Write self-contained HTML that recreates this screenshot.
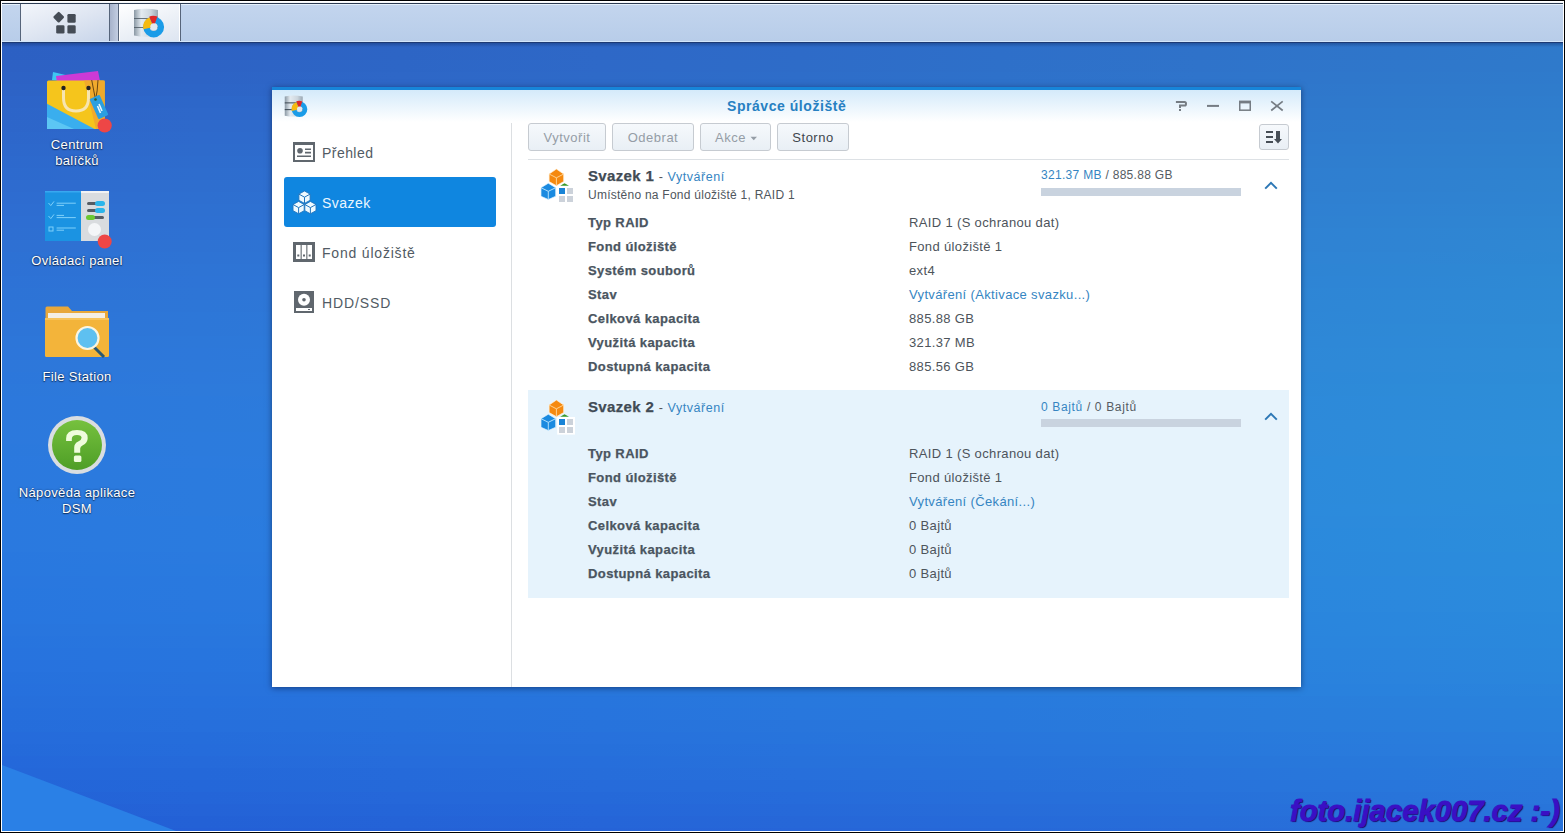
<!DOCTYPE html>
<html><head><meta charset="utf-8">
<style>
*{margin:0;padding:0;box-sizing:border-box}
html,body{width:1565px;height:833px;overflow:hidden;background:#000;font-family:"Liberation Sans",sans-serif;position:relative}
.a{position:absolute}
.t{position:absolute;white-space:nowrap}
#frame{position:absolute;left:1px;top:1px;width:1563px;height:831px;background:#fff}
#desk{position:absolute;left:2px;top:2px;width:1561px;height:829px;overflow:hidden;
 background:#2c6ed0}
.tb-sep{position:absolute;top:4px;width:1px;height:37px;background:#56647a}
.dl{position:absolute;width:160px;text-align:center;color:#fff;font-size:13px;letter-spacing:.35px;line-height:16px;text-shadow:0 0 2px rgba(0,20,60,.7),0 1px 1px rgba(0,0,0,.5)}
#win{position:absolute;left:272px;top:87px;width:1029px;height:600px;background:#fff;border-top:3px solid #1785d9;box-shadow:0 1px 6px rgba(0,10,40,.5)}
#tbar{position:absolute;left:272px;top:90px;width:1029px;height:32px;background:linear-gradient(#d4eafa,#ffffff)}
.btn{position:absolute;top:123px;height:28px;border:1px solid #c6cbd1;border-radius:3px;background:linear-gradient(#f6f9fc,#e9eff5);font-size:13px;letter-spacing:.5px;color:#959da6;text-align:center;line-height:27px}
.side{position:absolute;left:322px;font-size:14px;letter-spacing:.45px;color:#525b64;line-height:16px}
.lab{position:absolute;left:588px;font-size:13px;font-weight:bold;letter-spacing:.4px;color:#4a5560;line-height:16px;-webkit-text-stroke:.25px #4a5560}
.val{position:absolute;left:909px;font-size:13px;letter-spacing:.35px;color:#4d545b;line-height:16px}
.blue,.vh span.blue{color:#3585c2}
.vh{position:absolute;left:588px;font-size:15px;font-weight:bold;letter-spacing:.35px;color:#414b55;line-height:18px;-webkit-text-stroke:.25px #414b55}
.vh span{font-size:12.5px;font-weight:normal;letter-spacing:.55px;color:#555;-webkit-text-stroke:0}
.cap{position:absolute;left:1041px;font-size:12px;letter-spacing:.3px;color:#555c63;line-height:14px}
.bar{position:absolute;left:1041px;width:200px;height:8px;background:#c9d3df}
</style></head>
<body>
<div id="frame"></div>
<div id="desk"><svg class="a" style="left:-2px;top:-2px" width="1565" height="833"><defs><linearGradient id="r0"><stop offset="0.000" stop-color="#2c5fc2"/><stop offset="0.128" stop-color="#2d61c3"/><stop offset="0.256" stop-color="#2d64c4"/><stop offset="0.383" stop-color="#2e67c6"/><stop offset="0.511" stop-color="#2e6ac7"/><stop offset="0.639" stop-color="#2e6ec8"/><stop offset="0.767" stop-color="#2e71c9"/><stop offset="0.895" stop-color="#2f75ca"/><stop offset="1.000" stop-color="#2f79ca"/></linearGradient><linearGradient id="r1"><stop offset="0.000" stop-color="#2c5fc2"/><stop offset="0.128" stop-color="#2d61c3"/><stop offset="0.256" stop-color="#2d64c4"/><stop offset="0.383" stop-color="#2e67c6"/><stop offset="0.511" stop-color="#2e6ac7"/><stop offset="0.639" stop-color="#2e6ec8"/><stop offset="0.767" stop-color="#2e71c9"/><stop offset="0.895" stop-color="#2f75ca"/><stop offset="1.000" stop-color="#2f79ca"/></linearGradient><linearGradient id="r2"><stop offset="0.000" stop-color="#2c5fc2"/><stop offset="0.128" stop-color="#2d61c3"/><stop offset="0.256" stop-color="#2d64c4"/><stop offset="0.383" stop-color="#2e67c6"/><stop offset="0.511" stop-color="#2e6ac7"/><stop offset="0.639" stop-color="#2e6ec8"/><stop offset="0.767" stop-color="#2e71c9"/><stop offset="0.895" stop-color="#2f75ca"/><stop offset="1.000" stop-color="#2f79ca"/></linearGradient><linearGradient id="r3"><stop offset="0.000" stop-color="#2c5fc2"/><stop offset="0.128" stop-color="#2d61c3"/><stop offset="0.256" stop-color="#2d64c4"/><stop offset="0.383" stop-color="#2e67c6"/><stop offset="0.511" stop-color="#2e6ac7"/><stop offset="0.639" stop-color="#2e6ec8"/><stop offset="0.767" stop-color="#2e71c9"/><stop offset="0.895" stop-color="#2f75ca"/><stop offset="1.000" stop-color="#2f79ca"/></linearGradient><linearGradient id="r4"><stop offset="0.000" stop-color="#2c60c3"/><stop offset="0.128" stop-color="#2d62c4"/><stop offset="0.256" stop-color="#2d65c5"/><stop offset="0.383" stop-color="#2e68c7"/><stop offset="0.511" stop-color="#2e6bc8"/><stop offset="0.639" stop-color="#2e6fc9"/><stop offset="0.767" stop-color="#2f72c9"/><stop offset="0.895" stop-color="#2f76ca"/><stop offset="1.000" stop-color="#2f7acb"/></linearGradient><linearGradient id="r5"><stop offset="0.000" stop-color="#2d61c4"/><stop offset="0.128" stop-color="#2d63c5"/><stop offset="0.256" stop-color="#2d66c6"/><stop offset="0.383" stop-color="#2e69c8"/><stop offset="0.511" stop-color="#2e6cc8"/><stop offset="0.639" stop-color="#2e70c9"/><stop offset="0.767" stop-color="#2f73ca"/><stop offset="0.895" stop-color="#2f77cb"/><stop offset="1.000" stop-color="#2f7acb"/></linearGradient><linearGradient id="r6"><stop offset="0.000" stop-color="#2d62c5"/><stop offset="0.128" stop-color="#2d64c6"/><stop offset="0.256" stop-color="#2e67c7"/><stop offset="0.383" stop-color="#2e6ac8"/><stop offset="0.511" stop-color="#2e6dc9"/><stop offset="0.639" stop-color="#2e71ca"/><stop offset="0.767" stop-color="#2f74cb"/><stop offset="0.895" stop-color="#2f78cb"/><stop offset="1.000" stop-color="#2f7bcc"/></linearGradient><linearGradient id="r7"><stop offset="0.000" stop-color="#2d63c6"/><stop offset="0.128" stop-color="#2d65c7"/><stop offset="0.256" stop-color="#2e68c8"/><stop offset="0.383" stop-color="#2e6bc9"/><stop offset="0.511" stop-color="#2e6eca"/><stop offset="0.639" stop-color="#2f72cb"/><stop offset="0.767" stop-color="#2f75cb"/><stop offset="0.895" stop-color="#2f79cc"/><stop offset="1.000" stop-color="#2f7ccc"/></linearGradient><linearGradient id="r8"><stop offset="0.000" stop-color="#2d64c8"/><stop offset="0.128" stop-color="#2d67c9"/><stop offset="0.256" stop-color="#2e69c9"/><stop offset="0.383" stop-color="#2e6cca"/><stop offset="0.511" stop-color="#2e6fcb"/><stop offset="0.639" stop-color="#2f73cc"/><stop offset="0.767" stop-color="#2f76cc"/><stop offset="0.895" stop-color="#2f7acc"/><stop offset="1.000" stop-color="#2f7dcd"/></linearGradient><linearGradient id="r9"><stop offset="0.000" stop-color="#2d65c9"/><stop offset="0.128" stop-color="#2e68ca"/><stop offset="0.256" stop-color="#2e6aca"/><stop offset="0.383" stop-color="#2e6dcb"/><stop offset="0.511" stop-color="#2e70cc"/><stop offset="0.639" stop-color="#2f74cc"/><stop offset="0.767" stop-color="#2f77cd"/><stop offset="0.895" stop-color="#2f7bcd"/><stop offset="1.000" stop-color="#2f7ecd"/></linearGradient><linearGradient id="r10"><stop offset="0.000" stop-color="#2d66ca"/><stop offset="0.128" stop-color="#2e69cb"/><stop offset="0.256" stop-color="#2e6bcb"/><stop offset="0.383" stop-color="#2e6ecc"/><stop offset="0.511" stop-color="#2e71cc"/><stop offset="0.639" stop-color="#2f75cd"/><stop offset="0.767" stop-color="#2f78cd"/><stop offset="0.895" stop-color="#2f7cce"/><stop offset="1.000" stop-color="#2f7fce"/></linearGradient><linearGradient id="r11"><stop offset="0.000" stop-color="#2d67cb"/><stop offset="0.128" stop-color="#2e6acc"/><stop offset="0.256" stop-color="#2e6ccc"/><stop offset="0.383" stop-color="#2e6fcd"/><stop offset="0.511" stop-color="#2f72cd"/><stop offset="0.639" stop-color="#2f76ce"/><stop offset="0.767" stop-color="#2f79ce"/><stop offset="0.895" stop-color="#2f7dce"/><stop offset="1.000" stop-color="#2f80ce"/></linearGradient><linearGradient id="r12"><stop offset="0.000" stop-color="#2d68cc"/><stop offset="0.128" stop-color="#2e6bcc"/><stop offset="0.256" stop-color="#2e6dcd"/><stop offset="0.383" stop-color="#2e70ce"/><stop offset="0.511" stop-color="#2f73ce"/><stop offset="0.639" stop-color="#2f77ce"/><stop offset="0.767" stop-color="#2f7acf"/><stop offset="0.895" stop-color="#2f7ecf"/><stop offset="1.000" stop-color="#2f81cf"/></linearGradient><linearGradient id="r13"><stop offset="0.000" stop-color="#2d69cd"/><stop offset="0.128" stop-color="#2e6ccd"/><stop offset="0.256" stop-color="#2e6ece"/><stop offset="0.383" stop-color="#2e71ce"/><stop offset="0.511" stop-color="#2f74cf"/><stop offset="0.639" stop-color="#2f77cf"/><stop offset="0.767" stop-color="#2f7bcf"/><stop offset="0.895" stop-color="#2f7fcf"/><stop offset="1.000" stop-color="#2f82cf"/></linearGradient><linearGradient id="r14"><stop offset="0.000" stop-color="#2d6ace"/><stop offset="0.128" stop-color="#2e6dce"/><stop offset="0.256" stop-color="#2e6fcf"/><stop offset="0.383" stop-color="#2e72cf"/><stop offset="0.511" stop-color="#2f75d0"/><stop offset="0.639" stop-color="#2f78d0"/><stop offset="0.767" stop-color="#2f7cd0"/><stop offset="0.895" stop-color="#2f80d0"/><stop offset="1.000" stop-color="#2f83d0"/></linearGradient><linearGradient id="r15"><stop offset="0.000" stop-color="#2e6bcf"/><stop offset="0.128" stop-color="#2e6ecf"/><stop offset="0.256" stop-color="#2e70d0"/><stop offset="0.383" stop-color="#2e73d0"/><stop offset="0.511" stop-color="#2f76d0"/><stop offset="0.639" stop-color="#2f79d0"/><stop offset="0.767" stop-color="#2f7dd0"/><stop offset="0.895" stop-color="#2f80d0"/><stop offset="1.000" stop-color="#2f84d0"/></linearGradient><linearGradient id="r16"><stop offset="0.000" stop-color="#2e6cd0"/><stop offset="0.128" stop-color="#2e6fd0"/><stop offset="0.256" stop-color="#2e71d1"/><stop offset="0.383" stop-color="#2e74d1"/><stop offset="0.511" stop-color="#2f77d1"/><stop offset="0.639" stop-color="#2f7ad1"/><stop offset="0.767" stop-color="#2f7ed1"/><stop offset="0.895" stop-color="#2f81d1"/><stop offset="1.000" stop-color="#2f84d1"/></linearGradient><linearGradient id="r17"><stop offset="0.000" stop-color="#2e6dd1"/><stop offset="0.128" stop-color="#2e70d1"/><stop offset="0.256" stop-color="#2e72d1"/><stop offset="0.383" stop-color="#2e75d2"/><stop offset="0.511" stop-color="#2f78d2"/><stop offset="0.639" stop-color="#2f7bd2"/><stop offset="0.767" stop-color="#2f7ed2"/><stop offset="0.895" stop-color="#2f82d2"/><stop offset="1.000" stop-color="#2f85d1"/></linearGradient><linearGradient id="r18"><stop offset="0.000" stop-color="#2e6ed2"/><stop offset="0.128" stop-color="#2e70d2"/><stop offset="0.256" stop-color="#2e73d2"/><stop offset="0.383" stop-color="#2e76d2"/><stop offset="0.511" stop-color="#2f79d2"/><stop offset="0.639" stop-color="#2f7cd2"/><stop offset="0.767" stop-color="#2f7fd2"/><stop offset="0.895" stop-color="#2f83d2"/><stop offset="1.000" stop-color="#2f86d2"/></linearGradient><linearGradient id="r19"><stop offset="0.000" stop-color="#2e6fd2"/><stop offset="0.128" stop-color="#2e71d3"/><stop offset="0.256" stop-color="#2e74d3"/><stop offset="0.383" stop-color="#2e77d3"/><stop offset="0.511" stop-color="#2e79d3"/><stop offset="0.639" stop-color="#2f7dd3"/><stop offset="0.767" stop-color="#2f80d3"/><stop offset="0.895" stop-color="#2f84d3"/><stop offset="1.000" stop-color="#2f87d2"/></linearGradient><linearGradient id="r20"><stop offset="0.000" stop-color="#2e70d3"/><stop offset="0.128" stop-color="#2e72d3"/><stop offset="0.256" stop-color="#2e75d4"/><stop offset="0.383" stop-color="#2e77d4"/><stop offset="0.511" stop-color="#2e7ad4"/><stop offset="0.639" stop-color="#2f7dd4"/><stop offset="0.767" stop-color="#2f81d3"/><stop offset="0.895" stop-color="#2f84d3"/><stop offset="1.000" stop-color="#2f88d3"/></linearGradient><linearGradient id="r21"><stop offset="0.000" stop-color="#2d71d4"/><stop offset="0.128" stop-color="#2e73d4"/><stop offset="0.256" stop-color="#2e75d4"/><stop offset="0.383" stop-color="#2e78d4"/><stop offset="0.511" stop-color="#2e7bd4"/><stop offset="0.639" stop-color="#2e7ed4"/><stop offset="0.767" stop-color="#2f82d4"/><stop offset="0.895" stop-color="#2f85d4"/><stop offset="1.000" stop-color="#2e88d3"/></linearGradient><linearGradient id="r22"><stop offset="0.000" stop-color="#2d71d5"/><stop offset="0.128" stop-color="#2e74d5"/><stop offset="0.256" stop-color="#2e76d5"/><stop offset="0.383" stop-color="#2e79d5"/><stop offset="0.511" stop-color="#2e7cd5"/><stop offset="0.639" stop-color="#2e7fd5"/><stop offset="0.767" stop-color="#2e82d4"/><stop offset="0.895" stop-color="#2e86d4"/><stop offset="1.000" stop-color="#2e89d4"/></linearGradient><linearGradient id="r23"><stop offset="0.000" stop-color="#2d72d6"/><stop offset="0.128" stop-color="#2e74d6"/><stop offset="0.256" stop-color="#2e77d6"/><stop offset="0.383" stop-color="#2e7ad6"/><stop offset="0.511" stop-color="#2e7cd6"/><stop offset="0.639" stop-color="#2e80d5"/><stop offset="0.767" stop-color="#2e83d5"/><stop offset="0.895" stop-color="#2e86d5"/><stop offset="1.000" stop-color="#2e8ad4"/></linearGradient><linearGradient id="r24"><stop offset="0.000" stop-color="#2d73d6"/><stop offset="0.128" stop-color="#2e75d6"/><stop offset="0.256" stop-color="#2e78d6"/><stop offset="0.383" stop-color="#2e7ad6"/><stop offset="0.511" stop-color="#2e7dd6"/><stop offset="0.639" stop-color="#2e80d6"/><stop offset="0.767" stop-color="#2e84d6"/><stop offset="0.895" stop-color="#2e87d5"/><stop offset="1.000" stop-color="#2e8ad5"/></linearGradient><linearGradient id="r25"><stop offset="0.000" stop-color="#2d74d7"/><stop offset="0.128" stop-color="#2d76d7"/><stop offset="0.256" stop-color="#2e78d7"/><stop offset="0.383" stop-color="#2e7bd7"/><stop offset="0.511" stop-color="#2e7ed7"/><stop offset="0.639" stop-color="#2e81d6"/><stop offset="0.767" stop-color="#2e84d6"/><stop offset="0.895" stop-color="#2e88d6"/><stop offset="1.000" stop-color="#2e8bd5"/></linearGradient><linearGradient id="r26"><stop offset="0.000" stop-color="#2d74d8"/><stop offset="0.128" stop-color="#2d77d8"/><stop offset="0.256" stop-color="#2e79d8"/><stop offset="0.383" stop-color="#2e7cd8"/><stop offset="0.511" stop-color="#2e7ed7"/><stop offset="0.639" stop-color="#2e81d7"/><stop offset="0.767" stop-color="#2e85d7"/><stop offset="0.895" stop-color="#2e88d6"/><stop offset="1.000" stop-color="#2e8bd5"/></linearGradient><linearGradient id="r27"><stop offset="0.000" stop-color="#2d75d8"/><stop offset="0.128" stop-color="#2d77d8"/><stop offset="0.256" stop-color="#2e7ad8"/><stop offset="0.383" stop-color="#2e7cd8"/><stop offset="0.511" stop-color="#2e7fd8"/><stop offset="0.639" stop-color="#2e82d7"/><stop offset="0.767" stop-color="#2e85d7"/><stop offset="0.895" stop-color="#2e89d6"/><stop offset="1.000" stop-color="#2e8cd6"/></linearGradient><linearGradient id="r28"><stop offset="0.000" stop-color="#2d76d9"/><stop offset="0.128" stop-color="#2d78d9"/><stop offset="0.256" stop-color="#2d7ad9"/><stop offset="0.383" stop-color="#2e7dd9"/><stop offset="0.511" stop-color="#2e7fd8"/><stop offset="0.639" stop-color="#2e83d8"/><stop offset="0.767" stop-color="#2e86d7"/><stop offset="0.895" stop-color="#2e89d7"/><stop offset="1.000" stop-color="#2e8cd6"/></linearGradient><linearGradient id="r29"><stop offset="0.000" stop-color="#2d76da"/><stop offset="0.128" stop-color="#2d78da"/><stop offset="0.256" stop-color="#2d7bd9"/><stop offset="0.383" stop-color="#2d7dd9"/><stop offset="0.511" stop-color="#2e80d9"/><stop offset="0.639" stop-color="#2e83d8"/><stop offset="0.767" stop-color="#2e86d8"/><stop offset="0.895" stop-color="#2e8ad7"/><stop offset="1.000" stop-color="#2e8dd7"/></linearGradient><linearGradient id="r30"><stop offset="0.000" stop-color="#2d77da"/><stop offset="0.128" stop-color="#2d79da"/><stop offset="0.256" stop-color="#2d7bda"/><stop offset="0.383" stop-color="#2d7eda"/><stop offset="0.511" stop-color="#2d80d9"/><stop offset="0.639" stop-color="#2e83d9"/><stop offset="0.767" stop-color="#2e87d8"/><stop offset="0.895" stop-color="#2e8ad8"/><stop offset="1.000" stop-color="#2e8dd7"/></linearGradient><linearGradient id="r31"><stop offset="0.000" stop-color="#2c77db"/><stop offset="0.128" stop-color="#2d79db"/><stop offset="0.256" stop-color="#2d7cda"/><stop offset="0.383" stop-color="#2d7eda"/><stop offset="0.511" stop-color="#2d81da"/><stop offset="0.639" stop-color="#2d84d9"/><stop offset="0.767" stop-color="#2d87d9"/><stop offset="0.895" stop-color="#2d8ad8"/><stop offset="1.000" stop-color="#2d8dd7"/></linearGradient><linearGradient id="r32"><stop offset="0.000" stop-color="#2c78db"/><stop offset="0.128" stop-color="#2d7adb"/><stop offset="0.256" stop-color="#2d7cdb"/><stop offset="0.383" stop-color="#2d7edb"/><stop offset="0.511" stop-color="#2d81da"/><stop offset="0.639" stop-color="#2d84da"/><stop offset="0.767" stop-color="#2d87d9"/><stop offset="0.895" stop-color="#2d8bd8"/><stop offset="1.000" stop-color="#2d8ed8"/></linearGradient><linearGradient id="r33"><stop offset="0.000" stop-color="#2c78dc"/><stop offset="0.128" stop-color="#2c7adc"/><stop offset="0.256" stop-color="#2d7cdb"/><stop offset="0.383" stop-color="#2d7fdb"/><stop offset="0.511" stop-color="#2d82db"/><stop offset="0.639" stop-color="#2d85da"/><stop offset="0.767" stop-color="#2d88da"/><stop offset="0.895" stop-color="#2d8bd9"/><stop offset="1.000" stop-color="#2d8ed8"/></linearGradient><linearGradient id="r34"><stop offset="0.000" stop-color="#2c78dc"/><stop offset="0.128" stop-color="#2c7adc"/><stop offset="0.256" stop-color="#2d7ddc"/><stop offset="0.383" stop-color="#2d7fdb"/><stop offset="0.511" stop-color="#2d82db"/><stop offset="0.639" stop-color="#2d85db"/><stop offset="0.767" stop-color="#2d88da"/><stop offset="0.895" stop-color="#2d8bd9"/><stop offset="1.000" stop-color="#2d8ed9"/></linearGradient><linearGradient id="r35"><stop offset="0.000" stop-color="#2c79dd"/><stop offset="0.128" stop-color="#2c7bdc"/><stop offset="0.256" stop-color="#2c7ddc"/><stop offset="0.383" stop-color="#2d7fdc"/><stop offset="0.511" stop-color="#2d82db"/><stop offset="0.639" stop-color="#2d85db"/><stop offset="0.767" stop-color="#2d88da"/><stop offset="0.895" stop-color="#2d8cda"/><stop offset="1.000" stop-color="#2d8fd9"/></linearGradient><linearGradient id="r36"><stop offset="0.000" stop-color="#2c79dd"/><stop offset="0.128" stop-color="#2c7bdd"/><stop offset="0.256" stop-color="#2c7ddd"/><stop offset="0.383" stop-color="#2c80dc"/><stop offset="0.511" stop-color="#2d82dc"/><stop offset="0.639" stop-color="#2d85db"/><stop offset="0.767" stop-color="#2d88db"/><stop offset="0.895" stop-color="#2d8cda"/><stop offset="1.000" stop-color="#2d8fd9"/></linearGradient><linearGradient id="r37"><stop offset="0.000" stop-color="#2b79dd"/><stop offset="0.128" stop-color="#2c7bdd"/><stop offset="0.256" stop-color="#2c7ddd"/><stop offset="0.383" stop-color="#2c80dd"/><stop offset="0.511" stop-color="#2c82dc"/><stop offset="0.639" stop-color="#2d85dc"/><stop offset="0.767" stop-color="#2d88db"/><stop offset="0.895" stop-color="#2d8cda"/><stop offset="1.000" stop-color="#2d8fda"/></linearGradient><linearGradient id="r38"><stop offset="0.000" stop-color="#2b79de"/><stop offset="0.128" stop-color="#2c7bde"/><stop offset="0.256" stop-color="#2c7ddd"/><stop offset="0.383" stop-color="#2c80dd"/><stop offset="0.511" stop-color="#2c82dc"/><stop offset="0.639" stop-color="#2c85dc"/><stop offset="0.767" stop-color="#2c89db"/><stop offset="0.895" stop-color="#2c8cdb"/><stop offset="1.000" stop-color="#2c8fda"/></linearGradient><linearGradient id="r39"><stop offset="0.000" stop-color="#2b79de"/><stop offset="0.128" stop-color="#2b7bde"/><stop offset="0.256" stop-color="#2c7dde"/><stop offset="0.383" stop-color="#2c80dd"/><stop offset="0.511" stop-color="#2c83dd"/><stop offset="0.639" stop-color="#2c85dc"/><stop offset="0.767" stop-color="#2c89dc"/><stop offset="0.895" stop-color="#2c8cdb"/><stop offset="1.000" stop-color="#2c8fda"/></linearGradient><linearGradient id="r40"><stop offset="0.000" stop-color="#2b79de"/><stop offset="0.128" stop-color="#2b7bde"/><stop offset="0.256" stop-color="#2b7dde"/><stop offset="0.383" stop-color="#2c80dd"/><stop offset="0.511" stop-color="#2c83dd"/><stop offset="0.639" stop-color="#2c85dc"/><stop offset="0.767" stop-color="#2c88dc"/><stop offset="0.895" stop-color="#2c8cdb"/><stop offset="1.000" stop-color="#2c8fda"/></linearGradient><linearGradient id="r41"><stop offset="0.000" stop-color="#2a79de"/><stop offset="0.128" stop-color="#2b7bde"/><stop offset="0.256" stop-color="#2b7dde"/><stop offset="0.383" stop-color="#2b80de"/><stop offset="0.511" stop-color="#2c82dd"/><stop offset="0.639" stop-color="#2c85dd"/><stop offset="0.767" stop-color="#2c88dc"/><stop offset="0.895" stop-color="#2c8cdb"/><stop offset="1.000" stop-color="#2c8fdb"/></linearGradient><linearGradient id="r42"><stop offset="0.000" stop-color="#2a79df"/><stop offset="0.128" stop-color="#2b7bde"/><stop offset="0.256" stop-color="#2b7dde"/><stop offset="0.383" stop-color="#2b80de"/><stop offset="0.511" stop-color="#2b82dd"/><stop offset="0.639" stop-color="#2c85dd"/><stop offset="0.767" stop-color="#2c88dc"/><stop offset="0.895" stop-color="#2c8cdc"/><stop offset="1.000" stop-color="#2c8edb"/></linearGradient><linearGradient id="r43"><stop offset="0.000" stop-color="#2a79df"/><stop offset="0.128" stop-color="#2a7bdf"/><stop offset="0.256" stop-color="#2b7dde"/><stop offset="0.383" stop-color="#2b80de"/><stop offset="0.511" stop-color="#2b82de"/><stop offset="0.639" stop-color="#2b85dd"/><stop offset="0.767" stop-color="#2c88dc"/><stop offset="0.895" stop-color="#2c8bdc"/><stop offset="1.000" stop-color="#2c8edb"/></linearGradient><linearGradient id="r44"><stop offset="0.000" stop-color="#2a79df"/><stop offset="0.128" stop-color="#2a7bdf"/><stop offset="0.256" stop-color="#2b7ddf"/><stop offset="0.383" stop-color="#2b7fde"/><stop offset="0.511" stop-color="#2b82de"/><stop offset="0.639" stop-color="#2b85dd"/><stop offset="0.767" stop-color="#2b88dd"/><stop offset="0.895" stop-color="#2b8bdc"/><stop offset="1.000" stop-color="#2c8edb"/></linearGradient><linearGradient id="r45"><stop offset="0.000" stop-color="#2a79df"/><stop offset="0.128" stop-color="#2a7bdf"/><stop offset="0.256" stop-color="#2a7ddf"/><stop offset="0.383" stop-color="#2b7fde"/><stop offset="0.511" stop-color="#2b82de"/><stop offset="0.639" stop-color="#2b84dd"/><stop offset="0.767" stop-color="#2b87dd"/><stop offset="0.895" stop-color="#2b8bdc"/><stop offset="1.000" stop-color="#2b8edb"/></linearGradient><linearGradient id="r46"><stop offset="0.000" stop-color="#2978df"/><stop offset="0.128" stop-color="#2a7adf"/><stop offset="0.256" stop-color="#2a7cdf"/><stop offset="0.383" stop-color="#2a7fde"/><stop offset="0.511" stop-color="#2b81de"/><stop offset="0.639" stop-color="#2b84de"/><stop offset="0.767" stop-color="#2b87dd"/><stop offset="0.895" stop-color="#2b8adc"/><stop offset="1.000" stop-color="#2b8ddc"/></linearGradient><linearGradient id="r47"><stop offset="0.000" stop-color="#2978df"/><stop offset="0.128" stop-color="#297adf"/><stop offset="0.256" stop-color="#2a7cdf"/><stop offset="0.383" stop-color="#2a7ede"/><stop offset="0.511" stop-color="#2a81de"/><stop offset="0.639" stop-color="#2b84de"/><stop offset="0.767" stop-color="#2b87dd"/><stop offset="0.895" stop-color="#2b8adc"/><stop offset="1.000" stop-color="#2b8ddc"/></linearGradient><linearGradient id="r48"><stop offset="0.000" stop-color="#2977df"/><stop offset="0.128" stop-color="#2979df"/><stop offset="0.256" stop-color="#2a7bdf"/><stop offset="0.383" stop-color="#2a7ede"/><stop offset="0.511" stop-color="#2a80de"/><stop offset="0.639" stop-color="#2a83de"/><stop offset="0.767" stop-color="#2b86dd"/><stop offset="0.895" stop-color="#2b89dd"/><stop offset="1.000" stop-color="#2b8cdc"/></linearGradient><linearGradient id="r49"><stop offset="0.000" stop-color="#2877df"/><stop offset="0.128" stop-color="#2979df"/><stop offset="0.256" stop-color="#297bdf"/><stop offset="0.383" stop-color="#2a7dde"/><stop offset="0.511" stop-color="#2a80de"/><stop offset="0.639" stop-color="#2a83de"/><stop offset="0.767" stop-color="#2a86dd"/><stop offset="0.895" stop-color="#2b89dd"/><stop offset="1.000" stop-color="#2b8cdc"/></linearGradient><linearGradient id="r50"><stop offset="0.000" stop-color="#2876df"/><stop offset="0.128" stop-color="#2978df"/><stop offset="0.256" stop-color="#297adf"/><stop offset="0.383" stop-color="#297dde"/><stop offset="0.511" stop-color="#2a7fde"/><stop offset="0.639" stop-color="#2a82de"/><stop offset="0.767" stop-color="#2a85dd"/><stop offset="0.895" stop-color="#2b88dd"/><stop offset="1.000" stop-color="#2b8bdc"/></linearGradient><linearGradient id="r51"><stop offset="0.000" stop-color="#2876df"/><stop offset="0.128" stop-color="#2878df"/><stop offset="0.256" stop-color="#297adf"/><stop offset="0.383" stop-color="#297cde"/><stop offset="0.511" stop-color="#2a7fde"/><stop offset="0.639" stop-color="#2a81de"/><stop offset="0.767" stop-color="#2a84dd"/><stop offset="0.895" stop-color="#2a87dd"/><stop offset="1.000" stop-color="#2a8adc"/></linearGradient><linearGradient id="r52"><stop offset="0.000" stop-color="#2875de"/><stop offset="0.128" stop-color="#2877de"/><stop offset="0.256" stop-color="#2979de"/><stop offset="0.383" stop-color="#297bde"/><stop offset="0.511" stop-color="#297ede"/><stop offset="0.639" stop-color="#2a81de"/><stop offset="0.767" stop-color="#2a83dd"/><stop offset="0.895" stop-color="#2a87dd"/><stop offset="1.000" stop-color="#2a89dc"/></linearGradient><linearGradient id="r53"><stop offset="0.000" stop-color="#2774de"/><stop offset="0.128" stop-color="#2876de"/><stop offset="0.256" stop-color="#2878de"/><stop offset="0.383" stop-color="#297ade"/><stop offset="0.511" stop-color="#297dde"/><stop offset="0.639" stop-color="#2980de"/><stop offset="0.767" stop-color="#2a83dd"/><stop offset="0.895" stop-color="#2a86dd"/><stop offset="1.000" stop-color="#2a89dc"/></linearGradient><linearGradient id="r54"><stop offset="0.000" stop-color="#2773de"/><stop offset="0.128" stop-color="#2775de"/><stop offset="0.256" stop-color="#2877de"/><stop offset="0.383" stop-color="#287ade"/><stop offset="0.511" stop-color="#297cde"/><stop offset="0.639" stop-color="#297fde"/><stop offset="0.767" stop-color="#2a82dd"/><stop offset="0.895" stop-color="#2a85dd"/><stop offset="1.000" stop-color="#2a88dc"/></linearGradient><linearGradient id="r55"><stop offset="0.000" stop-color="#2772de"/><stop offset="0.128" stop-color="#2774de"/><stop offset="0.256" stop-color="#2876de"/><stop offset="0.383" stop-color="#2879de"/><stop offset="0.511" stop-color="#297bde"/><stop offset="0.639" stop-color="#297edd"/><stop offset="0.767" stop-color="#2981dd"/><stop offset="0.895" stop-color="#2a84dd"/><stop offset="1.000" stop-color="#2a87dc"/></linearGradient><linearGradient id="r56"><stop offset="0.000" stop-color="#2671dd"/><stop offset="0.128" stop-color="#2773dd"/><stop offset="0.256" stop-color="#2775de"/><stop offset="0.383" stop-color="#2878de"/><stop offset="0.511" stop-color="#287add"/><stop offset="0.639" stop-color="#297ddd"/><stop offset="0.767" stop-color="#2980dd"/><stop offset="0.895" stop-color="#2a83dd"/><stop offset="1.000" stop-color="#2a86dc"/></linearGradient><linearGradient id="r57"><stop offset="0.000" stop-color="#2670dd"/><stop offset="0.128" stop-color="#2772dd"/><stop offset="0.256" stop-color="#2774dd"/><stop offset="0.383" stop-color="#2877dd"/><stop offset="0.511" stop-color="#2879dd"/><stop offset="0.639" stop-color="#297cdd"/><stop offset="0.767" stop-color="#297fdd"/><stop offset="0.895" stop-color="#2982dd"/><stop offset="1.000" stop-color="#2a84dc"/></linearGradient><linearGradient id="r58"><stop offset="0.000" stop-color="#266fdc"/><stop offset="0.128" stop-color="#2671dd"/><stop offset="0.256" stop-color="#2773dd"/><stop offset="0.383" stop-color="#2775dd"/><stop offset="0.511" stop-color="#2878dd"/><stop offset="0.639" stop-color="#287add"/><stop offset="0.767" stop-color="#297ddd"/><stop offset="0.895" stop-color="#2980dc"/><stop offset="1.000" stop-color="#2983dc"/></linearGradient><linearGradient id="r59"><stop offset="0.000" stop-color="#256edc"/><stop offset="0.128" stop-color="#2670dc"/><stop offset="0.256" stop-color="#2772dc"/><stop offset="0.383" stop-color="#2774dd"/><stop offset="0.511" stop-color="#2877dd"/><stop offset="0.639" stop-color="#2879dd"/><stop offset="0.767" stop-color="#297cdc"/><stop offset="0.895" stop-color="#297fdc"/><stop offset="1.000" stop-color="#2982dc"/></linearGradient><linearGradient id="r60"><stop offset="0.000" stop-color="#256ddb"/><stop offset="0.128" stop-color="#266fdc"/><stop offset="0.256" stop-color="#2671dc"/><stop offset="0.383" stop-color="#2773dc"/><stop offset="0.511" stop-color="#2875dc"/><stop offset="0.639" stop-color="#2878dc"/><stop offset="0.767" stop-color="#297bdc"/><stop offset="0.895" stop-color="#297edc"/><stop offset="1.000" stop-color="#2981dc"/></linearGradient><linearGradient id="r61"><stop offset="0.000" stop-color="#256bdb"/><stop offset="0.128" stop-color="#256ddb"/><stop offset="0.256" stop-color="#266fdc"/><stop offset="0.383" stop-color="#2771dc"/><stop offset="0.511" stop-color="#2774dc"/><stop offset="0.639" stop-color="#2876dc"/><stop offset="0.767" stop-color="#2879dc"/><stop offset="0.895" stop-color="#297cdc"/><stop offset="1.000" stop-color="#297fdc"/></linearGradient><linearGradient id="r62"><stop offset="0.000" stop-color="#246ada"/><stop offset="0.128" stop-color="#256cdb"/><stop offset="0.256" stop-color="#266edb"/><stop offset="0.383" stop-color="#2670db"/><stop offset="0.511" stop-color="#2772dc"/><stop offset="0.639" stop-color="#2875dc"/><stop offset="0.767" stop-color="#2878dc"/><stop offset="0.895" stop-color="#297bdc"/><stop offset="1.000" stop-color="#297edc"/></linearGradient><linearGradient id="r63"><stop offset="0.000" stop-color="#2468da"/><stop offset="0.128" stop-color="#256ada"/><stop offset="0.256" stop-color="#266cdb"/><stop offset="0.383" stop-color="#266edb"/><stop offset="0.511" stop-color="#2771db"/><stop offset="0.639" stop-color="#2773db"/><stop offset="0.767" stop-color="#2876db"/><stop offset="0.895" stop-color="#2879db"/><stop offset="1.000" stop-color="#297cdb"/></linearGradient><linearGradient id="r64"><stop offset="0.000" stop-color="#2467d9"/><stop offset="0.128" stop-color="#2468d9"/><stop offset="0.256" stop-color="#256ada"/><stop offset="0.383" stop-color="#266dda"/><stop offset="0.511" stop-color="#276fdb"/><stop offset="0.639" stop-color="#2772db"/><stop offset="0.767" stop-color="#2874db"/><stop offset="0.895" stop-color="#2878db"/><stop offset="1.000" stop-color="#297adb"/></linearGradient><linearGradient id="r65"><stop offset="0.000" stop-color="#2365d8"/><stop offset="0.128" stop-color="#2467d9"/><stop offset="0.256" stop-color="#2569d9"/><stop offset="0.383" stop-color="#266bda"/><stop offset="0.511" stop-color="#266dda"/><stop offset="0.639" stop-color="#2770da"/><stop offset="0.767" stop-color="#2873db"/><stop offset="0.895" stop-color="#2876db"/><stop offset="1.000" stop-color="#2978db"/></linearGradient><linearGradient id="r66"><stop offset="0.000" stop-color="#2363d7"/><stop offset="0.128" stop-color="#2465d8"/><stop offset="0.256" stop-color="#2567d9"/><stop offset="0.383" stop-color="#2569d9"/><stop offset="0.511" stop-color="#266bda"/><stop offset="0.639" stop-color="#276eda"/><stop offset="0.767" stop-color="#2771da"/><stop offset="0.895" stop-color="#2874da"/><stop offset="1.000" stop-color="#2977db"/></linearGradient><linearGradient id="r67"><stop offset="0.000" stop-color="#2361d6"/><stop offset="0.128" stop-color="#2463d7"/><stop offset="0.256" stop-color="#2465d8"/><stop offset="0.383" stop-color="#2567d9"/><stop offset="0.511" stop-color="#2669d9"/><stop offset="0.639" stop-color="#276cd9"/><stop offset="0.767" stop-color="#276fda"/><stop offset="0.895" stop-color="#2872da"/><stop offset="1.000" stop-color="#2875da"/></linearGradient><linearGradient id="r68"><stop offset="0.000" stop-color="#225fd6"/><stop offset="0.128" stop-color="#2361d6"/><stop offset="0.256" stop-color="#2463d7"/><stop offset="0.383" stop-color="#2565d8"/><stop offset="0.511" stop-color="#2667d8"/><stop offset="0.639" stop-color="#266ad9"/><stop offset="0.767" stop-color="#276dd9"/><stop offset="0.895" stop-color="#2870da"/><stop offset="1.000" stop-color="#2873da"/></linearGradient><linearGradient id="r69"><stop offset="0.000" stop-color="#225dd5"/><stop offset="0.128" stop-color="#235fd6"/><stop offset="0.256" stop-color="#2461d6"/><stop offset="0.383" stop-color="#2563d7"/><stop offset="0.511" stop-color="#2665d8"/><stop offset="0.639" stop-color="#2668d8"/><stop offset="0.767" stop-color="#276bd9"/><stop offset="0.895" stop-color="#286ed9"/><stop offset="1.000" stop-color="#2870d9"/></linearGradient></defs><rect y="0" width="1565" height="12" fill="url(#r0)"/><rect y="12" width="1565" height="12" fill="url(#r1)"/><rect y="24" width="1565" height="12" fill="url(#r2)"/><rect y="36" width="1565" height="12" fill="url(#r3)"/><rect y="48" width="1565" height="12" fill="url(#r4)"/><rect y="60" width="1565" height="12" fill="url(#r5)"/><rect y="72" width="1565" height="12" fill="url(#r6)"/><rect y="84" width="1565" height="12" fill="url(#r7)"/><rect y="96" width="1565" height="12" fill="url(#r8)"/><rect y="108" width="1565" height="12" fill="url(#r9)"/><rect y="120" width="1565" height="12" fill="url(#r10)"/><rect y="132" width="1565" height="12" fill="url(#r11)"/><rect y="144" width="1565" height="12" fill="url(#r12)"/><rect y="156" width="1565" height="12" fill="url(#r13)"/><rect y="168" width="1565" height="12" fill="url(#r14)"/><rect y="180" width="1565" height="12" fill="url(#r15)"/><rect y="192" width="1565" height="12" fill="url(#r16)"/><rect y="204" width="1565" height="12" fill="url(#r17)"/><rect y="216" width="1565" height="12" fill="url(#r18)"/><rect y="228" width="1565" height="12" fill="url(#r19)"/><rect y="240" width="1565" height="12" fill="url(#r20)"/><rect y="252" width="1565" height="12" fill="url(#r21)"/><rect y="264" width="1565" height="12" fill="url(#r22)"/><rect y="276" width="1565" height="12" fill="url(#r23)"/><rect y="288" width="1565" height="12" fill="url(#r24)"/><rect y="300" width="1565" height="12" fill="url(#r25)"/><rect y="312" width="1565" height="12" fill="url(#r26)"/><rect y="324" width="1565" height="12" fill="url(#r27)"/><rect y="336" width="1565" height="12" fill="url(#r28)"/><rect y="348" width="1565" height="12" fill="url(#r29)"/><rect y="360" width="1565" height="12" fill="url(#r30)"/><rect y="372" width="1565" height="12" fill="url(#r31)"/><rect y="384" width="1565" height="12" fill="url(#r32)"/><rect y="396" width="1565" height="12" fill="url(#r33)"/><rect y="408" width="1565" height="12" fill="url(#r34)"/><rect y="420" width="1565" height="12" fill="url(#r35)"/><rect y="432" width="1565" height="12" fill="url(#r36)"/><rect y="444" width="1565" height="12" fill="url(#r37)"/><rect y="456" width="1565" height="12" fill="url(#r38)"/><rect y="468" width="1565" height="12" fill="url(#r39)"/><rect y="480" width="1565" height="12" fill="url(#r40)"/><rect y="492" width="1565" height="12" fill="url(#r41)"/><rect y="504" width="1565" height="12" fill="url(#r42)"/><rect y="516" width="1565" height="12" fill="url(#r43)"/><rect y="528" width="1565" height="12" fill="url(#r44)"/><rect y="540" width="1565" height="12" fill="url(#r45)"/><rect y="552" width="1565" height="12" fill="url(#r46)"/><rect y="564" width="1565" height="12" fill="url(#r47)"/><rect y="576" width="1565" height="12" fill="url(#r48)"/><rect y="588" width="1565" height="12" fill="url(#r49)"/><rect y="600" width="1565" height="12" fill="url(#r50)"/><rect y="612" width="1565" height="12" fill="url(#r51)"/><rect y="624" width="1565" height="12" fill="url(#r52)"/><rect y="636" width="1565" height="12" fill="url(#r53)"/><rect y="648" width="1565" height="12" fill="url(#r54)"/><rect y="660" width="1565" height="12" fill="url(#r55)"/><rect y="672" width="1565" height="12" fill="url(#r56)"/><rect y="684" width="1565" height="12" fill="url(#r57)"/><rect y="696" width="1565" height="12" fill="url(#r58)"/><rect y="708" width="1565" height="12" fill="url(#r59)"/><rect y="720" width="1565" height="12" fill="url(#r60)"/><rect y="732" width="1565" height="12" fill="url(#r61)"/><rect y="744" width="1565" height="12" fill="url(#r62)"/><rect y="756" width="1565" height="12" fill="url(#r63)"/><rect y="768" width="1565" height="12" fill="url(#r64)"/><rect y="780" width="1565" height="12" fill="url(#r65)"/><rect y="792" width="1565" height="12" fill="url(#r66)"/><rect y="804" width="1565" height="12" fill="url(#r67)"/><rect y="816" width="1565" height="12" fill="url(#r68)"/><rect y="828" width="1565" height="12" fill="url(#r69)"/></svg><svg class="a" style="left:0;top:0" width="1565" height="833"><path d="M0 763 L174 829 L0 829 Z" fill="#2a80e6"/></svg></div>

<!-- taskbar -->
<div class="a" style="left:2px;top:2px;width:1561px;height:1px;background:#f4f6f8"></div>
<div class="a" style="left:2px;top:3px;width:1561px;height:1px;background:#2b3b52"></div>
<div class="a" style="left:2px;top:4px;width:1561px;height:37px;background:linear-gradient(#c3d5ee,#b8cde9)"></div>
<div class="a" style="left:2px;top:41px;width:1561px;height:1px;background:#d3e6fa"></div>
<div class="a" style="left:2px;top:4px;width:1561px;height:1px;background:#e6f1fc"></div>
<div class="a" style="left:2px;top:42px;width:1561px;height:1px;background:#1d3a74"></div>
<div class="a" style="left:2px;top:43px;width:1561px;height:4px;background:linear-gradient(rgba(20,50,110,.45),rgba(20,50,110,0))"></div>
<div class="a" style="left:21px;top:4px;width:88px;height:37px;background:linear-gradient(160deg,#f3f6fb 0%,#dfe6f2 50%,#c8d5ea 100%)"></div>
<div class="tb-sep" style="left:20px"></div>
<div class="tb-sep" style="left:109px"></div>
<div class="a" style="left:110px;top:4px;width:8px;height:37px;background:linear-gradient(90deg,#a7b3cb,#c3cee2)"></div>
<div class="tb-sep" style="left:118px"></div>
<div class="a" style="left:119px;top:4px;width:61px;height:37px;background:linear-gradient(160deg,#ffffff 0%,#eaeff6 60%,#dde5f1 100%);border-left:1px solid #fff;border-right:1px solid #fff"></div>
<div class="tb-sep" style="left:180px"></div>
<!-- grid icon -->
<svg class="a" style="left:52px;top:10px" width="26" height="26" viewBox="0 0 26 26">
 <rect x="2.6" y="3.1" width="8.2" height="8.2" rx="1.2" transform="rotate(45 6.7 7.2)" fill="#454c56"/>
 <rect x="15.4" y="4" width="8.3" height="8.7" rx="1.3" fill="#454c56"/>
 <rect x="4.2" y="15.2" width="8.3" height="8.3" rx="1.3" fill="#454c56"/>
 <rect x="15.4" y="15.2" width="8.3" height="8.3" rx="1.3" fill="#454c56"/>
</svg>
<!-- storage manager icon taskbar -->
<svg class="a" style="left:133px;top:8px" width="32" height="31" viewBox="0 0 32 31">
 <defs><linearGradient id="cyl" x1="0" x2="1"><stop offset="0" stop-color="#8a98a4"/><stop offset=".3" stop-color="#e3eaf0"/><stop offset=".7" stop-color="#cdd6de"/><stop offset="1" stop-color="#9aa8b3"/></linearGradient></defs>
 <path d="M1 2 Q13 -0.5 25 2 L25 27.5 Q13 30 1 27.5 Z" fill="url(#cyl)"/>
 <path d="M1 10.5 L25 10.5 M1 19.5 L25 19.5" stroke="#4a5660" stroke-width="0.8"/>
 <circle cx="20.7" cy="19" r="7.2" fill="none" stroke="#1b9ce8" stroke-width="6.4"/>
 <path d="M20.7 19 L10.2 21.2 A10.6 10.6 0 0 1 16.5 9.2 Z" fill="#f6ba10"/>
 <path d="M20.7 19 L16.3 8.4 A11 11 0 0 1 24.4 8.6 Z" fill="#e02828"/>
 <circle cx="20.9" cy="18.8" r="3.6" fill="#e2e9f1"/>
</svg>
<!-- desktop icons -->
<!-- package center -->
<svg class="a" style="left:44px;top:68px" width="72" height="66" viewBox="0 0 72 66">
 <path d="M9 4 L30 9 L28 14 L8 12 Z" fill="#3fc6f2"/>
 <path d="M12 8 L54 3 L56 13 L13 15 Z" fill="#cc3ad6"/>
 <rect x="3" y="12.5" width="57.7" height="48.5" rx="1.5" fill="#f5c51c"/>
 <path d="M40 12.5 L60.7 12.5 L60.7 61 L52 61 Z" fill="#f0aa2c"/>
 <path d="M3 35.7 L50.6 61 L3 61 Z" fill="#3aaeee"/>
 <path d="M3 49 L30 61 L3 61 Z" fill="#5cc6f4"/>
 <path d="M19.5 20 L19.5 30 Q19.5 43 32 43 Q44.5 43 44.5 30 L44.5 20" fill="none" stroke="#f7e5b0" stroke-width="3"/>
 <circle cx="19.5" cy="20" r="2.2" fill="#222"/><circle cx="44.5" cy="20" r="2.2" fill="#222"/>
 <path d="M47.7 12 Q50 24 51.5 31.5 M54 12 Q53.5 24 51.5 31.5" fill="none" stroke="#5a3a10" stroke-width="0.9"/><rect x="49.5" y="28" width="11" height="22" rx="1" transform="rotate(-24 55 39)" fill="#2b9fe0"/><circle cx="51.5" cy="31.5" r="1.3" fill="#2a5a30"/><path d="M55 36 L58 43 M53.5 38 L56.5 45" stroke="#e8f6ff" stroke-width="1.6"/>
 <circle cx="60.7" cy="57.5" r="7.1" fill="#ee4646"/>
</svg>
<div class="dl" style="left:-3px;top:137px">Centrum<br>balíčků</div>

<!-- control panel -->
<svg class="a" style="left:44px;top:189px" width="72" height="62" viewBox="0 0 72 62">
 <rect x="1" y="2" width="36" height="50" fill="#1b93e2"/>
 <rect x="1" y="2" width="36" height="1.5" fill="#38a8f0"/>
 <rect x="37" y="2" width="28" height="50" fill="#d9dcdf"/>
 <rect x="37" y="2" width="28" height="2" fill="#f2f3f4"/>
 <g stroke="#7fd0fa" stroke-width="1" fill="none">
  <path d="M4.5 14 L6.8 16.6 L10 12.4"/><path d="M12.6 14.2 H31.8 M12.6 16.4 H20"/>
  <path d="M4.5 27 L6.8 29.6 L10 25.4"/><path d="M12.6 26.4 H20 M12.6 28.6 H31.8"/>
  <rect x="5" y="38" width="4" height="4"/><path d="M12.6 39 H31.8 M12.6 41.2 H20"/>
 </g>
 <rect x="43" y="13" width="17" height="3" rx="1.5" fill="#555c63"/><rect x="51" y="12" width="10" height="5" rx="2.5" fill="#2cb5ea"/>
 <rect x="43" y="20" width="17" height="3" rx="1.5" fill="#555c63"/><rect x="51" y="19" width="10" height="5" rx="2.5" fill="#2cb5ea"/>
 <rect x="43" y="27" width="17" height="3" rx="1.5" fill="#555c63"/><rect x="42" y="26" width="9" height="5" rx="2.5" fill="#6cc832"/>
 <circle cx="50.5" cy="40.5" r="6.5" fill="#f4f6f8"/>
 <circle cx="60.7" cy="52.5" r="7" fill="#ee4646"/>
</svg>
<div class="dl" style="left:-3px;top:253px">Ovládací panel</div>

<!-- file station -->
<svg class="a" style="left:44px;top:304px" width="72" height="58" viewBox="0 0 72 58">
 <path d="M1.5 4 Q1.5 2.5 3 2.5 L24 2.5 L28 7 L64 7 L64 14 L1.5 14 Z" fill="#e8a83a"/>
 <rect x="4" y="9" width="57" height="7" fill="#f4efe4"/>
 <rect x="1" y="14" width="64" height="39" rx="1.5" fill="#f3b43a"/>
 <rect x="1" y="14" width="64" height="2" fill="#f7c45a"/>
 <line x1="49" y1="42" x2="60" y2="53" stroke="#2a5872" stroke-width="3"/>
 <circle cx="43.5" cy="34" r="11" fill="#5ec0f0" stroke="#fbf5e0" stroke-width="2.2"/>
</svg>
<div class="dl" style="left:-3px;top:369px">File Station</div>

<!-- help -->
<svg class="a" style="left:46px;top:414px" width="62" height="62" viewBox="0 0 62 62">
 <defs><linearGradient id="grn" x1="0" y1="0" x2="0" y2="1"><stop offset="0" stop-color="#76c13e"/><stop offset="1" stop-color="#4e9e26"/></linearGradient></defs>
 <circle cx="31" cy="31" r="29" fill="#d9dde1"/>
 <circle cx="31" cy="31" r="25" fill="url(#grn)"/>
 <path d="M20.1 27 L20.1 24.5 Q20.1 15.9 31 15.9 Q41.7 15.9 41.7 24 Q41.7 29 36.8 31.3 Q34.2 32.6 34.2 34.5 L34.2 38.7 L28.2 38.7 L28.2 33.5 Q28.2 29.6 32.2 27.6 Q35.6 25.9 35.6 23.8 Q35.6 20.9 31 20.9 Q25.8 20.9 25.8 25 L25.8 27 Z" fill="#effcdc"/>
 <rect x="27.9" y="41.4" width="7.5" height="6.6" rx="1.6" fill="#effcdc"/>
</svg>
<div class="dl" style="left:-3px;top:485px">Nápověda aplikace<br>DSM</div>

<!-- watermark -->
<div id="wm" class="t" style="left:1290px;top:794px;font-size:30px;font-weight:bold;font-style:italic;color:#3a0fc4;letter-spacing:0px;line-height:34px;transform-origin:0 0;transform:scaleX(0.975);-webkit-text-stroke:1px #3a0fc4;text-shadow:1px 1px 1px #12065a">foto.ijacek007.cz :-)</div>

<!-- WINDOW -->
<div id="win"></div>
<div id="tbar"></div>
<!-- title icon -->
<svg class="a" style="left:284px;top:95px" width="24" height="23.25" viewBox="0 0 32 31">
 <path d="M1 2 Q13 -0.5 25 2 L25 27.5 Q13 30 1 27.5 Z" fill="url(#cyl)"/>
 <path d="M1 10.5 L25 10.5 M1 19.5 L25 19.5" stroke="#37434d" stroke-width="1.3"/>
 <circle cx="20.7" cy="19" r="7.2" fill="none" stroke="#1b9ce8" stroke-width="6.4"/>
 <path d="M20.7 19 L10.2 21.2 A10.6 10.6 0 0 1 16.5 9.2 Z" fill="#f6ba10"/>
 <path d="M20.7 19 L16.3 8.4 A11 11 0 0 1 24.4 8.6 Z" fill="#e02828"/>
 <circle cx="20.9" cy="18.8" r="3.6" fill="#e2e9f1"/>
</svg>
<div id="title" class="t" style="left:727px;top:97px;font-size:14px;font-weight:bold;letter-spacing:.55px;color:#2680c2;line-height:18px">Správce úložiště</div>
<!-- window controls -->
<svg class="a" style="left:1170px;top:96px" width="120" height="20" viewBox="0 0 120 20">
 <path d="M5.9 5.9 H14.6 Q16 5.9 16 7.7 Q16 9.6 14.6 9.6 H10 V11.9" fill="none" stroke="#757c83" stroke-width="2"/>
 <rect x="9" y="13" width="2" height="2" fill="#757c83"/>
 <rect x="37" y="8.9" width="12" height="2" fill="#757c83"/>
 <rect x="69.75" y="5.5" width="10.5" height="8.7" fill="none" stroke="#757c83" stroke-width="1.5"/>
 <rect x="69" y="4.8" width="12" height="2.6" fill="#757c83"/>
 <path d="M101.2 5.3 L112.7 14.5 M112.7 5.3 L101.2 14.5" stroke="#757c83" stroke-width="1.7"/>
</svg>

<!-- sidebar -->
<div class="a" style="left:511px;top:123px;width:1px;height:564px;background:#dcdfe2"></div>
<svg class="a" style="left:293px;top:142px" width="22" height="20" viewBox="0 0 22 20">
 <rect x="1" y="1.5" width="20" height="17.5" fill="none" stroke="#60676e" stroke-width="2"/>
 <rect x="0" y="0" width="22" height="3" fill="#60676e"/>
 <circle cx="7" cy="8.8" r="2.8" fill="#60676e"/>
 <path d="M12 7.2 H18 M12 10.6 H18 M4 14.3 H18" stroke="#60676e" stroke-width="1.6"/>
</svg>
<div class="side" style="top:145px">Přehled</div>
<div class="a" style="left:284px;top:177px;width:212px;height:50px;background:#0f86e0;border-radius:3px"></div>
<svg class="a" style="left:288px;top:186px" width="34" height="32" viewBox="0 0 34 32"><path d="M16.5 5.0 L22.1 8.1 L22.1 14.3 L16.5 17.4 L10.9 14.3 L10.9 8.1 Z" fill="#effaff" stroke="#1f74bd" stroke-width="0.9"/><path d="M10.9 8.1 L16.5 11.2 L22.1 8.1 M16.5 11.2 L16.5 17.4" fill="none" stroke="#1f74bd" stroke-width="1"/><path d="M10.6 15.4 L16.2 18.5 L16.2 24.7 L10.6 27.8 L5.0 24.7 L5.0 18.5 Z" fill="#effaff" stroke="#1f74bd" stroke-width="0.9"/><path d="M5.0 18.5 L10.6 21.6 L16.2 18.5 M10.6 21.6 L10.6 27.8" fill="none" stroke="#1f74bd" stroke-width="1"/><path d="M22.4 15.4 L28.0 18.5 L28.0 24.7 L22.4 27.8 L16.8 24.7 L16.8 18.5 Z" fill="#effaff" stroke="#1f74bd" stroke-width="0.9"/><path d="M16.8 18.5 L22.4 21.6 L28.0 18.5 M22.4 21.6 L22.4 27.8" fill="none" stroke="#1f74bd" stroke-width="1"/></svg>
<div class="side" style="top:195px;color:#eaf6ff">Svazek</div>
<svg class="a" style="left:293px;top:242px" width="22" height="20" viewBox="0 0 22 20">
 <rect x="0" y="0" width="22" height="20" fill="#60676e"/>
 <rect x="3" y="3" width="4.6" height="14" fill="#fff"/><rect x="8.7" y="3" width="4.6" height="14" fill="#fff"/><rect x="14.4" y="3" width="4.6" height="14" fill="#fff"/>
 <rect x="4.3" y="12.5" width="2" height="2" fill="#60676e"/><rect x="10" y="12.5" width="2" height="2" fill="#60676e"/><rect x="15.7" y="12.5" width="2" height="2" fill="#60676e"/>
</svg>
<div class="side" style="top:245px;letter-spacing:.8px">Fond úložiště</div>
<svg class="a" style="left:294px;top:291px" width="20" height="22" viewBox="0 0 20 22">
 <rect x="0" y="0" width="20" height="22" fill="#60676e"/>
 <circle cx="10" cy="8.7" r="6" fill="#fff"/><circle cx="10" cy="8.7" r="1.8" fill="#60676e"/>
 <rect x="2" y="17" width="16" height="3" fill="#fff"/><rect x="14" y="18" width="2" height="1" fill="#60676e"/>
</svg>
<div class="side" style="top:295px;letter-spacing:.9px">HDD/SSD</div>

<!-- toolbar -->
<div class="btn" style="left:528px;width:78px">Vytvořit</div>
<div class="btn" style="left:612px;width:82px">Odebrat</div>
<div class="btn" style="left:700px;width:71px;padding-left:2px">Akce <svg width="8" height="5" style="margin-left:0px;vertical-align:1px" viewBox="0 0 8 5"><path d="M0.5 0.8 H7 L3.75 4.3 Z" fill="#959da6"/></svg></div>
<div class="btn" style="left:777px;width:72px;color:#3e464e">Storno</div>
<div class="btn" style="left:1259px;top:124px;height:26px;width:30px"></div>
<svg class="a" style="left:1264px;top:129px" width="20" height="16" viewBox="0 0 20 16">
 <rect x="2" y="2" width="7" height="2" fill="#474e56"/>
 <rect x="2" y="7" width="7" height="2" fill="#474e56"/>
 <rect x="2" y="12" width="7" height="2" fill="#474e56"/>
 <rect x="12" y="2" width="4" height="8.5" fill="#474e56"/>
 <path d="M10 10 H18 L14 14.6 Z" fill="#474e56"/>
</svg>
<div class="a" style="left:528px;top:159px;width:761px;height:1px;background:#dde1e5"></div>

<svg class="a" style="left:536px;top:164px" width="44" height="42" viewBox="0 0 44 42">
 
 <path d="M20.4 5 L27.7 10 L27.7 17.6 L20.4 21.7 L13.1 17.6 L13.1 10 Z" fill="#f5890f" stroke="#fff3e0" stroke-width="0.7"/>
 <path d="M13.1 10 L20.4 13.8 L27.7 10 M20.4 13.8 V21.7" fill="none" stroke="#ffd89c" stroke-width="0.9"/>
 <path d="M24.2 21.7 L33 21.7 L28.5 19.2 Z" fill="#3a9a2a"/>
 <path d="M12.3 19.2 L19.7 23.7 L19.7 32.3 L12.3 35.5 L5 32.3 L5 23.7 Z" fill="#1a8ae0" stroke="#e0f4ff" stroke-width="0.7"/>
 <path d="M5 23.7 L12.3 27.3 L19.7 23.7 M12.3 27.3 V35.5" fill="none" stroke="#bfe8ff" stroke-width="0.9"/>
 <rect x="23" y="24" width="6" height="6" fill="#1a84d6"/>
 <rect x="31" y="24" width="6" height="6" fill="#ccd2da"/>
 <rect x="23" y="32" width="6" height="6" fill="#ccd2da"/>
 <rect x="31" y="32" width="6" height="6" fill="#ccd2da"/>
</svg>
<div class="vh" style="top:167px">Svazek 1 <span>- <span class="blue">Vytváření</span></span></div>
<div class="t" style="left:588px;top:188px;font-size:12px;letter-spacing:.25px;color:#4f565d;line-height:14px">Umístěno na Fond úložiště 1, RAID 1</div>
<div class="cap" style="top:168px"><span class="blue">321.37 MB</span> / 885.88 GB</div>
<div class="bar" style="top:188px"></div>
<svg class="a" style="left:1264px;top:181px" width="14" height="9" viewBox="0 0 14 9"><path d="M1.2 7.6 L7 1.8 L12.8 7.6" fill="none" stroke="#2c77b5" stroke-width="2"/></svg>
<div class="lab" style="top:215px">Typ RAID</div><div class="val" style="top:215px">RAID 1 (S ochranou dat)</div>
<div class="lab" style="top:239px">Fond úložiště</div><div class="val" style="top:239px">Fond úložiště 1</div>
<div class="lab" style="top:263px">Systém souborů</div><div class="val" style="top:263px">ext4</div>
<div class="lab" style="top:287px">Stav</div><div class="val" style="top:287px"><span class="blue">Vytváření (Aktivace svazku...)</span></div>
<div class="lab" style="top:311px">Celková kapacita</div><div class="val" style="top:311px">885.88 GB</div>
<div class="lab" style="top:335px">Využitá kapacita</div><div class="val" style="top:335px">321.37 MB</div>
<div class="lab" style="top:359px">Dostupná kapacita</div><div class="val" style="top:359px">885.56 GB</div>
<div class="a" style="left:528px;top:390px;width:761px;height:208px;background:#e6f3fc"></div>
<svg class="a" style="left:536px;top:395px" width="44" height="42" viewBox="0 0 44 42">
 <rect x="21.2" y="22" width="17.8" height="17.6" fill="#fff"/>
 <path d="M20.4 5 L27.7 10 L27.7 17.6 L20.4 21.7 L13.1 17.6 L13.1 10 Z" fill="#f5890f" stroke="#fff3e0" stroke-width="0.7"/>
 <path d="M13.1 10 L20.4 13.8 L27.7 10 M20.4 13.8 V21.7" fill="none" stroke="#ffd89c" stroke-width="0.9"/>
 <path d="M24.2 21.7 L33 21.7 L28.5 19.2 Z" fill="#3a9a2a"/>
 <path d="M12.3 19.2 L19.7 23.7 L19.7 32.3 L12.3 35.5 L5 32.3 L5 23.7 Z" fill="#1a8ae0" stroke="#e0f4ff" stroke-width="0.7"/>
 <path d="M5 23.7 L12.3 27.3 L19.7 23.7 M12.3 27.3 V35.5" fill="none" stroke="#bfe8ff" stroke-width="0.9"/>
 <rect x="23" y="24" width="6" height="6" fill="#1a84d6"/>
 <rect x="31" y="24" width="6" height="6" fill="#ccd2da"/>
 <rect x="23" y="32" width="6" height="6" fill="#ccd2da"/>
 <rect x="31" y="32" width="6" height="6" fill="#ccd2da"/>
</svg>
<div class="vh" style="top:398px">Svazek 2 <span>- <span class="blue">Vytváření</span></span></div>
<div class="cap" style="top:400px;letter-spacing:.65px"><span class="blue">0 Bajtů</span> / 0 Bajtů</div>
<div class="bar" style="top:419px"></div>
<svg class="a" style="left:1264px;top:412px" width="14" height="9" viewBox="0 0 14 9"><path d="M1.2 7.6 L7 1.8 L12.8 7.6" fill="none" stroke="#2c77b5" stroke-width="2"/></svg>
<div class="lab" style="top:446px">Typ RAID</div><div class="val" style="top:446px">RAID 1 (S ochranou dat)</div>
<div class="lab" style="top:470px">Fond úložiště</div><div class="val" style="top:470px">Fond úložiště 1</div>
<div class="lab" style="top:494px">Stav</div><div class="val" style="top:494px"><span class="blue">Vytváření (Čekání...)</span></div>
<div class="lab" style="top:518px">Celková kapacita</div><div class="val" style="top:518px">0 Bajtů</div>
<div class="lab" style="top:542px">Využitá kapacita</div><div class="val" style="top:542px">0 Bajtů</div>
<div class="lab" style="top:566px">Dostupná kapacita</div><div class="val" style="top:566px">0 Bajtů</div>

</body></html>
